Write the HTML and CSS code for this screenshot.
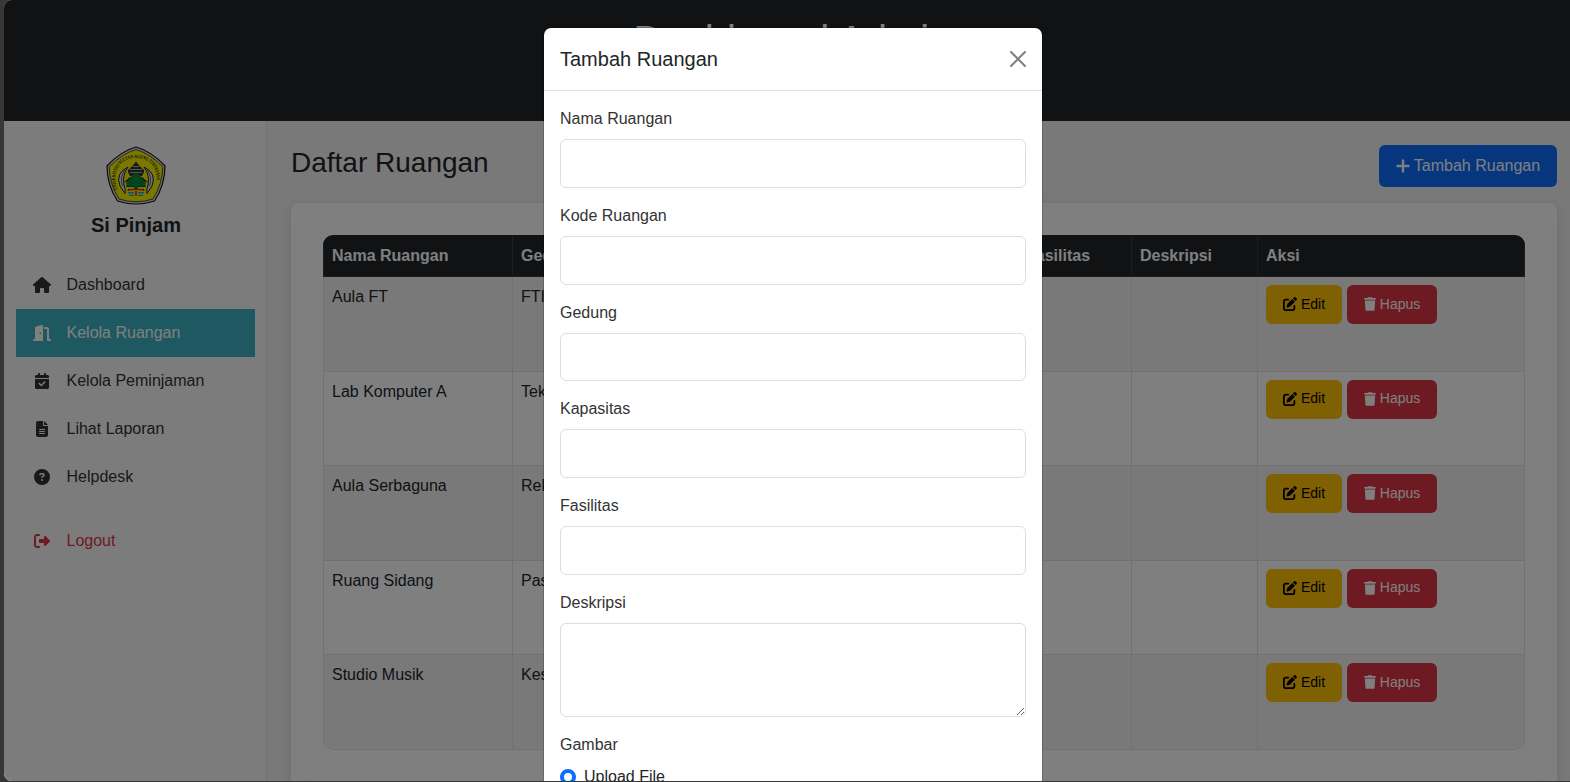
FILE: index.html
```html
<!DOCTYPE html>
<html lang="id">
<head>
<meta charset="utf-8">
<title>Dashboard Admin</title>
<link rel="stylesheet" href="styles.css">
</head>
<body>
<svg class="sprite" aria-hidden="true">
<symbol id="house" viewBox="0 0 576 512"><path d="M575.8 255.5c0 18-15 32.1-32 32.1h-32l.7 160.2c0 2.7-.2 5.4-.5 8.1V472c0 22.1-17.9 40-40 40H456c-1.1 0-2.2 0-3.3-.1c-1.4 .1-2.8 .1-4.2 .1H416 392c-22.1 0-40-17.9-40-40V448 384c0-17.7-14.3-32-32-32H256c-17.7 0-32 14.3-32 32v64 24c0 22.1-17.9 40-40 40H160 128.1c-1.5 0-3-.1-4.5-.2c-1.2 .1-2.4 .2-3.6 .2H104c-22.1 0-40-17.9-40-40V360c0-.9 0-1.9 .1-2.8V287.6H32c-18 0-32-14-32-32.1c0-9 3-17 10-24L266.4 8c7-7 15-8 22-8s15 2 21 7L564.8 231.5c8 7 12 15 11 24z"/></symbol>
<symbol id="door" viewBox="0 0 576 512"><path d="M320 32c0-9.9-4.5-19.2-12.3-25.2S289.8-1.4 280.2 1l-179.9 45C79 51.3 64 70.5 64 92.5V448H32c-17.7 0-32 14.3-32 32s14.3 32 32 32H96 288h32V480 32zM256 256c0 17.7-10.7 32-24 32s-24-14.3-24-32s10.7-32 24-32s24 14.3 24 32zm96-128h96V480c0 17.7 14.3 32 32 32h64c17.7 0 32-14.3 32-32s-14.3-32-32-32H512V128c0-35.3-28.7-64-64-64H352v64z"/></symbol>
<symbol id="calendar" viewBox="0 0 448 512"><path d="M128 0c17.7 0 32 14.3 32 32V64H288V32c0-17.7 14.3-32 32-32s32 14.3 32 32V64h48c26.5 0 48 21.5 48 48v48H0V112C0 85.5 21.5 64 48 64H96V32c0-17.7 14.3-32 32-32zM0 192H448V464c0 26.5-21.5 48-48 48H48c-26.5 0-48-21.5-48-48V192zM329 305c9.4-9.4 9.4-24.6 0-33.9s-24.6-9.4-33.9 0l-95 95-47-47c-9.4-9.4-24.6-9.4-33.9 0s-9.4 24.6 0 33.9l64 64c9.4 9.4 24.6 9.4 33.9 0L329 305z"/></symbol>
<symbol id="file" viewBox="0 0 384 512"><path d="M64 0C28.7 0 0 28.7 0 64V448c0 35.3 28.7 64 64 64H320c35.3 0 64-28.7 64-64V160H256c-17.7 0-32-14.3-32-32V0H64zM256 0V128H384L256 0zM112 256H272c8.8 0 16 7.2 16 16s-7.2 16-16 16H112c-8.8 0-16-7.2-16-16s7.2-16 16-16zm0 64H272c8.8 0 16 7.2 16 16s-7.2 16-16 16H112c-8.8 0-16-7.2-16-16s7.2-16 16-16zm0 64H272c8.8 0 16 7.2 16 16s-7.2 16-16 16H112c-8.8 0-16-7.2-16-16s7.2-16 16-16z"/></symbol>
<symbol id="question" viewBox="0 0 512 512"><path d="M256 512A256 256 0 1 0 256 0a256 256 0 1 0 0 512zM169.8 165.3c7.9-22.3 29.1-37.3 52.8-37.3h58.3c34.9 0 63.1 28.3 63.1 63.1c0 22.6-12.1 43.5-31.7 54.8L280 264.4c-.2 13-10.9 23.6-24 23.6c-13.3 0-24-10.7-24-24V250.5c0-8.6 4.6-16.5 12.1-20.8l44.3-25.4c4.7-2.7 7.6-7.7 7.6-13.1c0-8.4-6.8-15.1-15.1-15.1H222.6c-3.4 0-6.4 2.1-7.5 5.3l-.4 1.2c-4.4 12.5-18.2 19-30.6 14.6s-19-18.2-14.6-30.6l.4-1.2zM224 352a32 32 0 1 1 64 0 32 32 0 1 1-64 0z"/></symbol>
<symbol id="logout" viewBox="0 0 512 512"><path d="M377.9 105.9L500.7 228.7c7.2 7.2 11.3 17.1 11.3 27.3s-4.1 20.1-11.3 27.3L377.9 406.1c-6.4 6.4-15 9.9-24 9.9c-18.7 0-33.9-15.2-33.9-33.9l0-62.1-128 0c-17.7 0-32-14.3-32-32l0-64c0-17.7 14.3-32 32-32l128 0 0-62.1c0-18.7 15.2-33.9 33.9-33.9c9 0 17.6 3.6 24 9.9zM160 96L96 96c-17.7 0-32 14.3-32 32l0 256c0 17.7 14.3 32 32 32l64 0c17.7 0 32 14.3 32 32s-14.3 32-32 32l-64 0c-53 0-96-43-96-96L0 128C0 75 43 32 96 32l64 0c17.7 0 32 14.3 32 32s-14.3 32-32 32z"/></symbol>
<symbol id="plus" viewBox="0 0 448 512"><path d="M256 80c0-17.700-14.300-32-32-32s-32 14.300-32 32v144H48c-17.700 0-32 14.300-32 32s14.300 32 32 32h144v144c0 17.700 14.300 32 32 32s32-14.300 32-32V288h144c17.700 0 32-14.300 32-32s-14.300-32-32-32H256V80z"/></symbol>
<symbol id="edit" viewBox="0 0 512 512"><path d="M471.6 21.7c-21.9-21.9-57.3-21.9-79.2 0L362.3 51.7l97.9 97.9 30.1-30.1c21.9-21.9 21.9-57.3 0-79.2L471.6 21.7zm-299.2 220c-6.1 6.1-10.8 13.6-13.5 21.9l-29.6 88.8c-2.9 8.6-.6 18.1 5.8 24.6s15.9 8.7 24.6 5.8l88.8-29.6c8.2-2.7 15.7-7.4 21.9-13.5L437.7 172.3 339.7 74.3 172.4 241.7zM96 64C43 64 0 107 0 160V416c0 53 43 96 96 96H352c53 0 96-43 96-96V320c0-17.7-14.3-32-32-32s-32 14.3-32 32v96c0 17.7-14.3 32-32 32H96c-17.7 0-32-14.3-32-32V160c0-17.7 14.3-32 32-32h96c17.7 0 32-14.3 32-32s-14.3-32-32-32H96z"/></symbol>
<symbol id="trash" viewBox="0 0 448 512"><path d="M135.2 17.7L128 32H32C14.3 32 0 46.3 0 64S14.3 96 32 96H416c17.7 0 32-14.3 32-32s-14.3-32-32-32H320l-7.2-14.3C307.4 6.8 296.3 0 284.2 0H163.8c-12.1 0-23.2 6.8-28.6 17.7zM416 128H32L53.2 467c1.6 25.3 22.6 45 47.9 45H346.9c25.3 0 46.3-19.7 47.9-45L416 128z"/></symbol>
</svg>

<div class="window">
  <div class="page">
    <header class="topbar"><h1>Dashboard Admin</h1></header>
    <div class="layout">
      <aside class="sidebar">
        <div class="brand">
          <svg class="logo" viewBox="0 0 60 60">
            <path d="M30 1Q45 5 59 20Q59 39 48.500 55Q30 61 11.500 55Q1 39 1 20Q15 5 30 1z" fill="#ddd" stroke="#111" stroke-width="1.200"/>
            <path d="M30 3.500Q44 7.500 56.800 21Q56.500 38 47 53Q30 58.500 13 53Q3.500 38 3.200 21Q16 7.500 30 3.500z" fill="#f4f000" stroke="#222" stroke-width=".8"/>
            <path id="arc" d="M11.500 43.500C5 26 14 12 30 12S55 26 48.500 43.500" fill="none"/>
            <text class="logo-text"><textPath href="#arc" textLength="78" lengthAdjust="spacingAndGlyphs">UNIVERSITAS SULTAN AGENG TIRTAYASA</textPath></text>
            <path d="M22 21Q9 27 14 40L19 47.500Q20 44 18 39Q16 29 22 21zM38 21Q51 27 46 40L41 47.500Q40 44 42 39Q44 29 38 21z" fill="#ddd" stroke="#222" stroke-width="1"/>
            <path d="M19 24Q13.500 30 16.500 40M41 24Q46.500 30 43.500 40" fill="none" stroke="#333" stroke-width=".7"/>
            <path d="M30 15.500L33.500 20L38 24V26L36 30H24L22 26V24L26.500 20z" fill="#333"/>
            <path d="M27 20.500H33M23.500 23.500H36.500M24 26.500H36" stroke="#bbb" stroke-width=".9"/>
            <path d="M18 36L24 31H36L42 36H38L40 41H20L22 36z" fill="#333"/>
            <path d="M30 27L34 29L36 33L40 37Q40 41 32 40V44H28V40Q20 41 20 37L24 33L26 29z" fill="#008a3c"/>
            <path d="M22.500 45V43.500H37.500V45M30 45V50" stroke="#e01818" stroke-width="1.500" fill="none"/>
            <path d="M22 47Q25 46 28 47M32 47Q35 46 38 47M23 49.700Q25.500 48.500 28 49.700M32 49.700Q34.500 48.500 37 49.700" stroke="#18a8d0" stroke-width="1.400" fill="none"/>
          </svg>
          <div class="brand-name">Si Pinjam</div>
        </div>
        <nav class="nav">
          <a class="nav-item"><span class="nav-icon"><svg class="icon w18"><use href="#house"/></svg></span>Dashboard</a>
          <a class="nav-item active"><span class="nav-icon"><svg class="icon w18"><use href="#door"/></svg></span>Kelola Ruangan</a>
          <a class="nav-item"><span class="nav-icon"><svg class="icon w14"><use href="#calendar"/></svg></span>Kelola Peminjaman</a>
          <a class="nav-item"><span class="nav-icon"><svg class="icon w12"><use href="#file"/></svg></span>Lihat Laporan</a>
          <a class="nav-item"><span class="nav-icon"><svg class="icon"><use href="#question"/></svg></span>Helpdesk</a>
          <a class="nav-item logout"><span class="nav-icon"><svg class="icon"><use href="#logout"/></svg></span>Logout</a>
        </nav>
      </aside>
      <main class="content">
        <div class="content-head">
          <h3>Daftar Ruangan</h3>
          <button class="btn primary"><svg class="icon w14"><use href="#plus"/></svg>Tambah Ruangan</button>
        </div>
        <div class="card">
          <div class="table-wrap">
            <table class="rooms">
              <colgroup><col class="c-name"><col class="c-building"><col class="c-capacity"><col class="c-image"><col class="c-facility"><col class="c-desc"><col class="c-action"></colgroup>
              <thead><tr><th>Nama Ruangan</th><th>Gedung</th><th>Kapasitas</th><th>Gambar</th><th>Fasilitas</th><th>Deskripsi</th><th>Aksi</th></tr></thead>
              <tbody>
                <tr><td>Aula FT</td><td>FTI</td><td></td><td></td><td></td><td></td><td><div class="actions"><button class="btn small edit"><svg class="icon"><use href="#edit"/></svg>Edit</button><button class="btn small delete"><svg class="icon w12"><use href="#trash"/></svg>Hapus</button></div></td></tr>
                <tr><td>Lab Komputer A</td><td>Teknik</td><td></td><td></td><td></td><td></td><td><div class="actions"><button class="btn small edit"><svg class="icon"><use href="#edit"/></svg>Edit</button><button class="btn small delete"><svg class="icon w12"><use href="#trash"/></svg>Hapus</button></div></td></tr>
                <tr><td>Aula Serbaguna</td><td>Rektorat</td><td></td><td></td><td></td><td></td><td><div class="actions"><button class="btn small edit"><svg class="icon"><use href="#edit"/></svg>Edit</button><button class="btn small delete"><svg class="icon w12"><use href="#trash"/></svg>Hapus</button></div></td></tr>
                <tr><td>Ruang Sidang</td><td>Pasca</td><td></td><td></td><td></td><td></td><td><div class="actions"><button class="btn small edit"><svg class="icon"><use href="#edit"/></svg>Edit</button><button class="btn small delete"><svg class="icon w12"><use href="#trash"/></svg>Hapus</button></div></td></tr>
                <tr><td>Studio Musik</td><td>Kesenian</td><td></td><td></td><td></td><td></td><td><div class="actions"><button class="btn small edit"><svg class="icon"><use href="#edit"/></svg>Edit</button><button class="btn small delete"><svg class="icon w12"><use href="#trash"/></svg>Hapus</button></div></td></tr>
              </tbody>
            </table>
          </div>
        </div>
      </main>
    </div>
  </div>
  <div class="backdrop">
    <div class="modal">
      <div class="modal-head">
        <h5>Tambah Ruangan</h5>
        <svg class="close" viewBox="0 0 16 16"><path d="M.293.293a1 1 0 0 1 1.414 0L8 6.586 14.293.293a1 1 0 1 1 1.414 1.414L9.414 8l6.293 6.293a1 1 0 0 1-1.414 1.414L8 9.414l-6.293 6.293a1 1 0 0 1-1.414-1.414L6.586 8 .293 1.707a1 1 0 0 1 0-1.414z"/></svg>
      </div>
      <form class="modal-body">
        <div class="field"><label>Nama Ruangan</label><input type="text" class="control"></div>
        <div class="field"><label>Kode Ruangan</label><input type="text" class="control"></div>
        <div class="field"><label>Gedung</label><input type="text" class="control"></div>
        <div class="field"><label>Kapasitas</label><input type="text" class="control"></div>
        <div class="field"><label>Fasilitas</label><input type="text" class="control"></div>
        <div class="field"><label>Deskripsi</label><textarea class="control area"></textarea></div>
        <div class="field"><label>Gambar</label>
          <div class="check"><span class="radio"></span><span>Upload File</span></div>
        </div>
      </form>
    </div>
  </div>
</div>
</body>
</html>
```

FILE: styles.css
```css
* { box-sizing: border-box; }

body {
  margin: 0;
  height: 782px;
  overflow: hidden;
  padding: 0 0 1px 4px;
  background: #393735;
  color: #212529;
  font: 16px/24px "Liberation Sans", Arial, sans-serif;
}

h1, h3, h5 { margin: 0; font-weight: 400; }
.sprite { display: none; }
.icon { width: 16px; height: 16px; fill: currentColor; flex: none; }
.w18 { width: 18px; }
.w14 { width: 14px; }
.w12 { width: 12px; }

.window {
  position: relative;
  height: 781px;
  overflow: hidden;
  border-radius: 8px 0 0 8px;
}
.page { width: 1577px; height: 781px; background: #f2f2f2; }

.topbar {
  height: 121px;
  padding-top: 16px;
  background: #212529;
  color: #fff;
  text-align: center;
}
.topbar h1 { font-size: 40px; line-height: 48px; }

.layout { display: flex; height: 660px; }

.sidebar {
  width: 263px;
  padding: 25px 11px 0 12px;
  border-right: 1px solid #e2e2e2;
  background: #f8f9fa;
}
.brand { display: flex; flex-direction: column; align-items: center; height: 115px; padding-left: 1px; }
.logo { width: 60px; height: 60px; }
.logo-text { font: bold 5px "Liberation Serif", serif; fill: #111; }
.brand-name { margin-top: 7px; font-size: 20px; font-weight: 700; }

.nav-item {
  display: flex;
  align-items: center;
  height: 48px;
  padding-left: 14px;
  color: #333;
}
.nav-icon { display: flex; justify-content: center; width: 24px; margin-right: 12.5px; }
.active { background: #3cb3c3; color: #fff; }
.logout { margin-top: 16px; color: #dc3545; }

.content { flex: 1; padding: 24px 24px 0; }
.content-head { display: flex; justify-content: space-between; height: 58px; }
.content-head h3 { font-size: 28px; line-height: 36px; }

.btn {
  display: flex;
  align-items: center;
  justify-content: center;
  gap: 4px;
  padding: 0;
  border: 0;
  border-radius: 6px;
  font: 16px/24px "Liberation Sans", Arial, sans-serif;
}
.primary { width: 178px; height: 42px; background: #0d6efd; color: #fff; }
.primary .icon { stroke: currentColor; stroke-width: 14; }
.actions { display: flex; gap: 5px; }
.small { height: 39px; font-size: 14px; line-height: 21px; padding-bottom: 1px; }
.small .icon { height: 14px; }
.small .icon:not(.w12) { width: 14px; }
.edit { width: 76px; background: #ffc107; color: #000; }
.delete { width: 90px; background: #dc3545; color: #fff; }

.card {
  height: 620px;
  padding: 16px;
  border-radius: 8px;
  background: #fff;
  box-shadow: 0 4px 16px rgba(0, 0, 0, .1);
}
.table-wrap {
  height: 562px;
  padding: 16px;
  border-radius: 8px;
  box-shadow: 0 0 4px rgba(0, 0, 0, .05);
}

.rooms {
  width: 1202px;
  height: 515px;
  table-layout: fixed;
  border-spacing: 0;
  border-radius: 10px;
  overflow: hidden;
}
.c-name { width: 190px; }
.c-building { width: 126px; }
.c-capacity { width: 126px; }
.c-image { width: 253px; }
.c-facility { width: 114px; }
.c-desc { width: 126px; }
.c-action { width: 267px; }
.rooms th, .rooms td {
  padding: 8px 8px 0;
  border: 0 solid #dee2e6;
  border-width: 0 1px 1px 0;
  text-align: left;
  vertical-align: top;
}
.rooms th:first-child, .rooms td:first-child { border-left-width: 1px; }
.rooms th { height: 42px; padding-top: 9px; border-color: #373b3e; background: #212529; color: #fff; }
.rooms tbody tr:nth-child(odd) td { background: #f2f2f2; }
.rooms tbody tr:last-child td:first-child { border-bottom-left-radius: 10px; }
.rooms tbody tr:last-child td:last-child { border-bottom-right-radius: 10px; }

/* dialog overlay */
.backdrop {
  position: absolute;
  top: 0;
  left: 0;
  width: 1578px;
  height: 781px;
  padding-top: 27px;
  overflow: hidden;
  background: rgba(0, 0, 0, .5);
}
.modal {
  width: 500px;
  height: 900px;
  margin: 0 auto;
  border: 1px solid rgba(0, 0, 0, .175);
  border-radius: 8px;
  background: #fff;
  background-clip: padding-box;
}
.modal-head {
  display: flex;
  align-items: center;
  justify-content: space-between;
  height: 63px;
  padding: 0 16px;
  border-bottom: 1px solid #dee2e6;
}
.modal-head h5 { font-size: 20px; line-height: 30px; }
.close { width: 16px; height: 16px; opacity: .5; }
.modal-body { padding: 16.1px 16px; }
.field { margin-bottom: 16px; color: #333; }
.field label { display: block; margin-bottom: 8px; }
.control {
  display: block;
  width: 100%;
  height: 48.8px;
  border: 1px solid #ddd;
  border-radius: 6px;
  background: #fff;
}
.area { height: 93.6px; resize: vertical; }
.check { display: flex; gap: 8px; color: #212529; }
.radio {
  width: 16px;
  height: 16px;
  margin-top: 4px;
  border: 4.500px solid #0d6efd;
  border-radius: 50%;
}
```
